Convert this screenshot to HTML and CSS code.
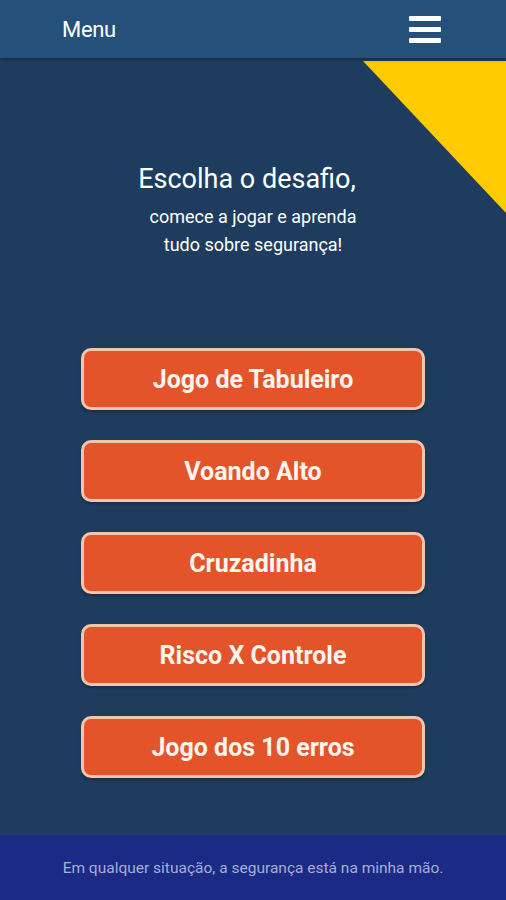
FILE: index.html
```html
<!DOCTYPE html>
<html lang="pt">
<head>
  <meta charset="UTF-8" />
  <meta name="viewport" content="width=device-width, initial-scale=1" />
  <title>Escolha o desafio</title>
  <link rel="stylesheet" href="styles.css">
</head>
<body>
  <header class="topbar">
    <span class="menu-label">Menu</span>
    <button class="burger" aria-label="Menu">
      <span></span><span></span><span></span>
    </button>
  </header>

  <main class="stage">
    <div class="corner"></div>

    <section class="intro">
      <h1>Escolha o desafio,</h1>
      <p>comece a jogar e aprenda<br>tudo sobre segurança!</p>
    </section>

    <nav class="games">
      <a class="game-btn" href="#">Jogo de Tabuleiro</a>
      <a class="game-btn" href="#">Voando Alto</a>
      <a class="game-btn" href="#">Cruzadinha</a>
      <a class="game-btn" href="#">Risco X Controle</a>
      <a class="game-btn" href="#">Jogo dos 10 erros</a>
    </nav>
  </main>

  <footer class="bottombar">
    <p>Em qualquer situação, a segurança está na minha mão.</p>
  </footer>
</body>
</html>
```

FILE: styles.css
```css
* {
  box-sizing: border-box;
  margin: 0;
  padding: 0;
  font-family: Roboto, "Liberation Sans", Arial, sans-serif;
}

html, body {
  height: 100%;
}

body {
  display: flex;
  flex-direction: column;
  background-color: #1e3d5e;
  color: #ffffff;
}

.topbar {
  height: 58px;
  display: flex;
  justify-content: space-between;
  align-items: center;
  padding: 0 65px 0 62px;
  background-color: #24507a;
  box-shadow: 0 2px 3px rgba(0, 0, 0, 0.25);
  position: relative;
  z-index: 2;
}

.menu-label {
  font-size: 22px;
  letter-spacing: -0.3px;
}

.burger {
  display: flex;
  flex-direction: column;
  gap: 6px;
  width: 32px;
  background: none;
  border: none;
  cursor: pointer;
}

.burger span {
  display: block;
  height: 5px;
  border-radius: 1px;
  background-color: #ffffff;
}

.stage {
  flex: 1;
  position: relative;
  overflow: hidden;
}

.corner {
  position: absolute;
  top: 3px;
  right: 0;
  width: 143px;
  height: 152px;
  background-color: #fecb00;
  clip-path: polygon(0 0, 100% 0, 100% 100%);
}

.intro {
  text-align: center;
  padding-top: 104px;
}

.intro h1 {
  padding-right: 12px;
  font-size: 27px;
  font-weight: 400;
  line-height: 34px;
}

.intro p {
  margin-top: 7px;
  font-size: 18px;
  line-height: 28px;
}

.games {
  display: flex;
  flex-direction: column;
  gap: 30px;
  align-items: center;
  margin-top: 89px;
}

.game-btn {
  width: 344px;
  height: 62px;
  display: flex;
  align-items: center;
  justify-content: center;
  background-color: #e4542a;
  border: 3px solid #f6c4ae;
  border-radius: 10px;
  color: #fff5ef;
  font-size: 25px;
  font-weight: 700;
  text-decoration: none;
  box-shadow: 0 2px 3px rgba(0, 0, 0, 0.25);
}

.bottombar {
  height: 65px;
  display: flex;
  align-items: center;
  justify-content: center;
  background-color: #1a2a85;
}

.bottombar p {
  font-size: 15.5px;
  color: #a6aed6;
}
```
